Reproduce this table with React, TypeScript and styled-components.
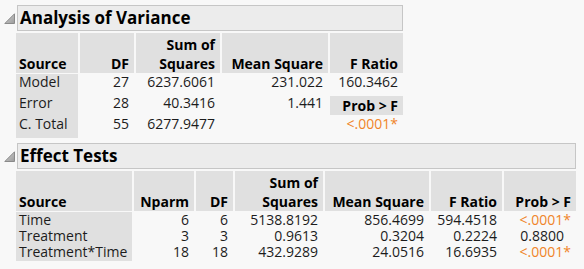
import styled, { createGlobalStyle } from "styled-components";

const GlobalStyle = createGlobalStyle`
  html, body {
    margin: 0;
    padding: 0;
    background: #f8f8f8;
  }
  body {
    font-family: "Open Sans", "Liberation Sans", sans-serif;
    color: #1c1c1c;
  }
`;

type Cell = string | { text: string; orange?: boolean; pad?: number };

const anova = {
  title: "Analysis of Variance",
  cols: [62, 54, 84, 106, 73],
  head: ["Source", "DF", "Sum of\nSquares", "Mean Square", "F Ratio"],
  rows: [
    ["Model", "27", "6237.6061", "231.022", "160.3462"],
    ["Error", "28", "40.3416", "1.441", "PROB"],
    ["C. Total", "55", "6277.9477", "", { text: "<.0001*", orange: true }],
  ] as Cell[][],
};

const effects = {
  title: "Effect Tests",
  cols: [116, 60, 37, 88, 104, 71, 72],
  head: ["Source", "Nparm", "DF", "Sum of\nSquares", "Mean Square", "F Ratio", "Prob > F"],
  rows: [
    ["Time", "6", "6", "5138.8192", "856.4699", "594.4518", { text: "<.0001*", orange: true }],
    ["Treatment", "3", "3", "0.9613", "0.3204", "0.2224", { text: "0.8800", pad: 12 }],
    ["Treatment*Time", "18", "18", "432.9289", "24.0516", "16.6935", { text: "<.0001*", orange: true }],
  ] as Cell[][],
};

function Disclosure() {
  return (
    <Toggle width="12" height="12" viewBox="0 0 12 12">
      <defs>
        <linearGradient id="tri" x1="0" y1="0" x2="1" y2="1">
          <stop offset="0" stopColor="#d4d4d4" />
          <stop offset="1" stopColor="#9a9a9a" />
        </linearGradient>
      </defs>
      <path d="M10.5 0.8 L10.5 10.5 L0.8 10.5 Z" fill="url(#tri)" stroke="#8a8a8a" strokeWidth="1" strokeLinejoin="round" />
    </Toggle>
  );
}

function Report({ data, rowHeight, lineHeight }: { data: typeof anova; rowHeight: number; lineHeight: number }) {
  return (
    <Outline>
      <TitleRow>
        <Disclosure />
        <TitleBox>{data.title}</TitleBox>
      </TitleRow>
      <Grid $cols={data.cols.map((c) => `${c}px`).join(" ")}>
        {data.head.map((h, i) => (
          <HeadCell key={h} $left={i === 0}>
            {h}
          </HeadCell>
        ))}
        {data.rows.map((row, r) =>
          row.map((cell, c) => {
            const last = r === data.rows.length - 1;
            if (cell === "PROB") {
              return (
                <BodyCell key={`${r}-${c}`} $h={rowHeight} $lh={lineHeight}>
                  <ProbLabel>Prob &gt; F</ProbLabel>
                </BodyCell>
              );
            }
            const v = typeof cell === "string" ? { text: cell } : cell;
            return (
              <BodyCell
                key={`${r}-${c}`}
                $h={rowHeight}
                $lh={lineHeight}
                $source={c === 0}
                $last={last}
                $orange={v.orange}
                $pad={v.pad}
              >
                {v.text}
              </BodyCell>
            );
          })
        )}
      </Grid>
    </Outline>
  );
}

export default function App() {
  return (
    <Page>
      <GlobalStyle />
      <Report data={anova} rowHeight={21} lineHeight={15} />
      <Report data={effects} rowHeight={16} lineHeight={16} />
    </Page>
  );
}

const Page = styled.div`
  display: flex;
  flex-direction: column;
  align-items: flex-start;
  gap: 5px;
  padding: 5px 0 0 0;
`;

const Outline = styled.section`
  display: inline-flex;
  flex-direction: column;
  gap: 2px;
`;

const TitleRow = styled.div`
  display: flex;
  align-items: center;
  gap: 1px;
  padding-left: 4px;
`;

const Toggle = styled.svg`
  flex: none;
  margin-top: 2px;
`;

const TitleBox = styled.div`
  flex: 1;
  height: 24px;
  line-height: 24px;
  background: #ececec;
  border: 1px solid #c6c6c6;
  padding-left: 2px;
  font-size: 17px;
  font-weight: 700;
  color: #000;
  white-space: nowrap;
`;

const Grid = styled.div<{ $cols: string }>`
  display: grid;
  grid-template-columns: ${(p) => p.$cols};
  column-gap: 2px;
  margin-left: 16px;
  font-size: 14px;
`;

const HeadCell = styled.div<{ $left?: boolean }>`
  height: 40px;
  margin-bottom: 1px;
  box-sizing: border-box;
  background: #e0e0e0;
  display: flex;
  align-items: flex-end;
  justify-content: ${(p) => (p.$left ? "flex-start" : "flex-end")};
  text-align: ${(p) => (p.$left ? "left" : "right")};
  white-space: pre;
  padding: 0 5px 0 3px;
  line-height: 19px;
  font-weight: 700;
  color: #000;
`;

const BodyCell = styled.div<{
  $h: number;
  $lh: number;
  $source?: boolean;
  $last?: boolean;
  $orange?: boolean;
  $pad?: number;
}>`
  height: ${(p) => p.$h}px;
  line-height: ${(p) => p.$lh}px;
  box-sizing: content-box;
  padding: 0 ${(p) => p.$pad ?? 5}px ${(p) => (p.$last && p.$source ? 1 : 0)}px 3px;
  text-align: ${(p) => (p.$source ? "left" : "right")};
  background: ${(p) => (p.$source ? "#e0e0e0" : "transparent")};
  color: ${(p) => (p.$orange ? "#f08428" : "#1c1c1c")};
  white-space: nowrap;
`;

const ProbLabel = styled.div`
  height: 19px;
  line-height: 19px;
  margin: 1px -5px 0 -3px;
  padding-right: 5px;
  background: #e0e0e0;
  font-weight: 700;
  color: #000;
  text-align: right;
`;
